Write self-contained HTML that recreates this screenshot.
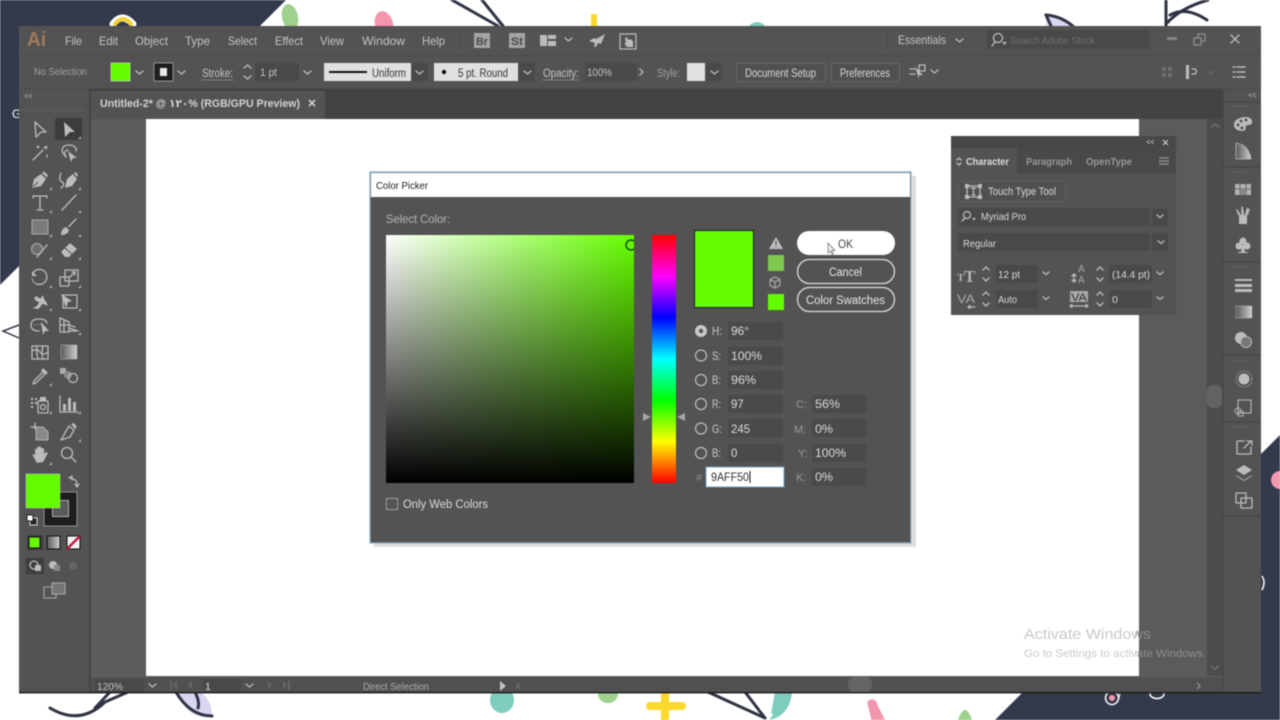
<!DOCTYPE html>
<html><head><meta charset="utf-8"><title>Illustrator Color Picker</title>
<style>
html,body{margin:0;padding:0;width:1280px;height:720px;overflow:hidden;background:#fff}
svg{display:block;position:absolute;left:0;top:0;filter:blur(.5px)}
text{font-family:"Liberation Sans","DejaVu Sans",sans-serif;font-size:11px;fill:#c4c4c4}
.i{fill:none;stroke:#bcbcbc;stroke-width:1.300;stroke-linejoin:round;stroke-linecap:round}
.f{fill:#bcbcbc;stroke:none}
.c{fill:none;stroke:#b8b8b8;stroke-width:1.400;stroke-linecap:round;stroke-linejoin:round}
.d{fill:none;stroke:#2f3343;stroke-width:3;stroke-linecap:round}
.fld{fill:#494949}
.lab{fill:#c8c8c8;font-size:12px}
.val{fill:#dcdcdc;font-size:11.500px}
</style></head><body>
<svg width="1280" height="720" viewBox="0 0 1280 720" xmlns="http://www.w3.org/2000/svg">
<defs>
<linearGradient id="sv1" x1="0" x2="1" y1="0" y2="0"><stop offset="0" stop-color="#fff"/><stop offset="1" stop-color="#66ff00"/></linearGradient>
<linearGradient id="sv2" x1="0" x2="0" y1="0" y2="1"><stop offset="0" stop-color="#000" stop-opacity="0"/><stop offset="1" stop-color="#000"/></linearGradient>
<linearGradient id="hue" x1="0" x2="0" y1="0" y2="1"><stop offset="0" stop-color="#f00"/><stop offset=".167" stop-color="#f0f"/><stop offset=".333" stop-color="#00f"/><stop offset=".5" stop-color="#0ff"/><stop offset=".667" stop-color="#0f0"/><stop offset=".833" stop-color="#ff0"/><stop offset="1" stop-color="#f00"/></linearGradient>
<linearGradient id="grad" x1="0" x2="1" y1="0" y2="0"><stop offset="0" stop-color="#5a5a5a"/><stop offset="1" stop-color="#d0d0d0"/></linearGradient>
<linearGradient id="awin" gradientUnits="userSpaceOnUse" x1="1024" x2="1210" y1="0" y2="0"><stop offset=".6" stop-color="#c9c9c9"/><stop offset=".6" stop-color="#8d8d8d"/></linearGradient>
<clipPath id="svc"><rect x="386" y="235" width="248" height="248"/></clipPath>
</defs>

<!-- background -->
<rect width="1280" height="720" fill="#fff"/>
<polygon points="0,0 286,0 0,285" fill="#343a4b"/>
<polygon points="995,720 1280,435 1280,720" fill="#343a4b"/>
<path d="M19 325L3 331L19 338" fill="none" stroke="#343a4b" stroke-width="1.500"/>
<ellipse cx="290" cy="17" rx="8" ry="13" fill="#9fd18e" transform="rotate(-12 290 17)"/>
<ellipse cx="384" cy="24" rx="9" ry="13" fill="#f396ae" transform="rotate(-15 384 24)"/>
<rect x="591" y="14" width="6" height="14" fill="#fbd92c"/>
<ellipse cx="757" cy="30" rx="9" ry="8" fill="#7fcdbd"/>
<path d="M1046 16 Q1062 16 1075 28 L1046 28Z" fill="#d8d5ef"/>
<path class="d" d="M1046 15 Q1062 16 1075 28" stroke-width="2"/>
<path class="d" d="M1046 15 L1052 28" stroke-width="2"/>
<path class="d" d="M452 0 L498 26 M482 0 L503 26"/>
<path class="d" d="M1166 0 V28 M1166 24 Q1180 8 1208 0 M1170 15 Q1186 6 1207 20" stroke-width="2"/>
<path d="M113 24 Q122 12 133 24" fill="none" stroke="#fff" stroke-width="7" stroke-linecap="round"/>
<path d="M115 24 Q123 14 131 24" fill="none" stroke="#f2cf32" stroke-width="4" stroke-linecap="round"/>
<text x="12" y="118" style="fill:#fff;font-size:12px">G</text>
<!-- bottom decorations -->
<path class="d" d="M50 708 Q80 726 105 702 L128 692 M95 708 L110 692" stroke-width="2"/>
<path d="M176 692 Q190 722 212 716 Q212 700 200 692Z" fill="#d8d5ef"/>
<path class="d" d="M176 692 Q190 716 212 716 M195 692 Q200 702 198 708" stroke-width="2"/>
<ellipse cx="502" cy="700" rx="12" ry="13" fill="#7fcdbd"/>
<ellipse cx="608" cy="694" rx="10" ry="9" fill="#9fd18e"/>
<path d="M665 692 V720 M650 706 H682" stroke="#fbd92c" stroke-width="8" stroke-linecap="round"/>
<path class="d" d="M708 692 L765 718 M745 692 L765 718"/>
<path d="M770 720 Q790 715 792 692 L775 692Z" fill="#7fcdbd"/>
<path d="M761 708 L772 716" stroke="#fff" stroke-width="4"/>
<path d="M867 702 Q875 695 878 706 L886 722 L872 722Z" fill="#f396ae"/>
<path d="M958 720 Q965 700 972 720Z" fill="#9fd18e"/>
<circle cx="1112" cy="698" r="6.500" fill="none" stroke="#fff" stroke-width="1.500"/><circle cx="1112" cy="698" r="3" fill="#f396ae"/><path d="M1116 703Q1120 698 1120 692" fill="none" stroke="#fff"/>
<ellipse cx="1157" cy="694" rx="7" ry="4.500" fill="none" stroke="#fff" stroke-width="1.500"/>
<circle cx="1280" cy="480" r="9" fill="#f396ae"/>
<path d="M1262 576 Q1266 582 1262 590" fill="none" stroke="#fff" stroke-width="1.500"/>

<!-- window -->
<rect x="19" y="26" width="1242" height="666" fill="#535353"/>
<rect x="19" y="692" width="1242" height="1.400" fill="#1a1a1a"/>
<rect x="19" y="55" width="1242" height="1" fill="#4b4b4b"/>
<rect x="19" y="88" width="1242" height="1" fill="#4a4a4a"/>
<!-- menu -->
<text x="27" y="46" textLength="19" lengthAdjust="spacingAndGlyphs" style="font-size:20px;font-weight:bold;fill:#a27a5a">Ai</text>
<text x="65" y="45" textLength="17" lengthAdjust="spacingAndGlyphs" style="font-size:12px">File</text>
<text x="99" y="45" textLength="19" lengthAdjust="spacingAndGlyphs" style="font-size:12px">Edit</text>
<text x="135" y="45" textLength="33" lengthAdjust="spacingAndGlyphs" style="font-size:12px">Object</text>
<text x="185" y="45" textLength="25" lengthAdjust="spacingAndGlyphs" style="font-size:12px">Type</text>
<text x="228" y="45" textLength="29" lengthAdjust="spacingAndGlyphs" style="font-size:12px">Select</text>
<text x="275" y="45" textLength="28" lengthAdjust="spacingAndGlyphs" style="font-size:12px">Effect</text>
<text x="320" y="45" textLength="24" lengthAdjust="spacingAndGlyphs" style="font-size:12px">View</text>
<text x="362" y="45" textLength="43" lengthAdjust="spacingAndGlyphs" style="font-size:12px">Window</text>
<text x="422" y="45" textLength="23" lengthAdjust="spacingAndGlyphs" style="font-size:12px">Help</text>
<rect x="460" y="32" width="1" height="17" fill="#4c4c4c"/>
<rect x="474" y="33" width="16" height="15" fill="#a4a4a4"/><text x="476" y="45" textLength="12" lengthAdjust="spacingAndGlyphs" style="font-size:11px;font-weight:bold;fill:#4a4a4a">Br</text>
<rect x="509" y="33" width="16" height="15" fill="#a4a4a4"/><text x="511" y="45" textLength="12" lengthAdjust="spacingAndGlyphs" style="font-size:11px;font-weight:bold;fill:#4a4a4a">St</text>
<path class="f" d="M540 35h7v11h-7zM548 35h8v4h-8zM548 41h8v5h-8z"/>
<path class="c" d="M565 38l3.500 3 3.500-3"/>
<path class="f" d="M605 34l-4 10-3-1-2 4-2-1 1-3-6-2 5-3 2 1z"/>
<rect x="620" y="34" width="16" height="15" fill="none" stroke="#b5b5b5" stroke-width="1.300"/><path class="f" d="M625 38l2-1 1 3 2-1 3 2v6h-6l-3-4 2 0z"/>
<rect x="887" y="32" width="1" height="17" fill="#4c4c4c"/>
<text x="898" y="44" textLength="48" lengthAdjust="spacingAndGlyphs" style="font-size:12px">Essentials</text>
<path class="c" d="M956 39l3.500 3 3.500-3"/>
<rect x="987" y="30" width="163" height="19" fill="#494949"/>
<circle cx="998" cy="38" r="4.500" class="i"/><path class="i" d="M995 42l-3 4"/><path class="f" d="M1002 42h5l-2.500 3z"/>
<text x="1010" y="44" textLength="85" lengthAdjust="spacingAndGlyphs" style="font-size:10.500px;fill:#6f6f6f">Search Adobe Stock</text>
<rect x="1167" y="37" width="10" height="3" fill="#858585"/>
<path class="i" style="stroke:#8f8f8f" d="M1194 38h7v7h-7zM1198 38v-4h7v7h-4"/>
<path class="c" d="M1231 35l8 8M1239 35l-8 8"/>

<!-- control bar -->
<text x="34" y="75" textLength="53" lengthAdjust="spacingAndGlyphs" style="font-size:10.500px;fill:#a0a0a0">No Selection</text>
<rect x="111" y="63" width="19" height="18" fill="#64fa00" stroke="#e8e8e8" stroke-width=".6"/>
<path class="c" d="M136 71l3.500 3 3.500-3"/>
<rect x="154" y="63" width="19" height="18" fill="#1e1e1e" stroke="#aaa" stroke-width=".8"/><rect x="160" y="68" width="7" height="8" fill="#e8e8e8"/>
<path class="c" d="M178 71l3.500 3 3.500-3"/>
<text x="202" y="77" textLength="31" lengthAdjust="spacingAndGlyphs" style="font-size:11.500px">Stroke:</text>
<path d="M202 80h31" stroke="#aaa" stroke-dasharray="1 1"/>
<path class="c" d="M244 68l3.500-3 3.500 3M244 76l3.500 3 3.500-3"/>
<rect x="255" y="63" width="44" height="18" class="fld"/>
<text x="260" y="76" textLength="17" lengthAdjust="spacingAndGlyphs" style="font-size:11px">1 pt</text>
<path class="c" d="M304 71l3.500 3 3.500-3"/>
<rect x="324" y="63" width="87" height="18" fill="#e0e0e0"/>
<rect x="329" y="71" width="38" height="2" fill="#111"/>
<text x="372" y="77" textLength="34" lengthAdjust="spacingAndGlyphs" style="font-size:11.500px;fill:#333">Uniform</text>
<rect x="412" y="63" width="16" height="18" fill="#494949"/><path class="c" d="M416 71l3.500 3 3.500-3"/>
<rect x="434" y="63" width="84" height="18" fill="#e0e0e0"/>
<circle cx="444" cy="72" r="2.200" fill="#111"/>
<text x="458" y="77" textLength="50" lengthAdjust="spacingAndGlyphs" style="font-size:11.500px;fill:#333">5 pt. Round</text>
<rect x="519" y="63" width="16" height="18" fill="#494949"/><path class="c" d="M524 71l3.500 3 3.500-3"/>
<text x="543" y="77" textLength="36" lengthAdjust="spacingAndGlyphs" style="font-size:11.500px">Opacity:</text>
<path d="M543 80h36" stroke="#aaa" stroke-dasharray="1 1"/>
<rect x="585" y="63" width="52" height="18" class="fld"/>
<text x="587" y="76" textLength="25" lengthAdjust="spacingAndGlyphs" style="font-size:11px">100%</text>
<path class="c" d="M640 69l3 3-3 3"/>
<text x="657" y="77" textLength="23" lengthAdjust="spacingAndGlyphs" style="font-size:11.500px;fill:#a0a0a0">Style:</text>
<rect x="687" y="63" width="18" height="18" fill="#e0e0e0"/>
<rect x="706" y="63" width="16" height="18" fill="#494949"/><path class="c" d="M711 71l3.500 3 3.500-3"/>
<rect x="736.500" y="63.500" width="89" height="18" fill="#505050" stroke="#666"/>
<text x="745" y="77" textLength="71" lengthAdjust="spacingAndGlyphs" style="font-size:11.500px;fill:#d8d8d8">Document Setup</text>
<rect x="831.500" y="63.500" width="68" height="18" fill="#505050" stroke="#666"/>
<text x="840" y="77" textLength="50" lengthAdjust="spacingAndGlyphs" style="font-size:11.500px;fill:#d8d8d8">Preferences</text>
<path class="i" d="M910 69h5M910 74h5M919 65h6v6h-6z"/><path class="f" d="M915 67l8 8-4 0 0 4z"/>
<path class="c" d="M931 70l3.500 3 3.500-3"/>
<path fill="#6e6e6e" d="M1162 67h4v4h-4zM1168 67h4v4h-4zM1162 73h4v4h-4zM1168 73h4v4h-4z"/>
<path class="f" d="M1186 65h3v14h-3z"/><path class="i" d="M1192 69h3q3 2 0 5h-3"/><path d="M1208 71l3 3 3-3" fill="none" stroke="#666" stroke-width="1.300"/>
<path class="c" d="M1233 67h2M1233 72h2M1233 77h2M1237 67h8M1237 72h8M1237 77h8"/>

<!-- doc tab row -->
<rect x="91" y="89" width="1132" height="30" fill="#434343"/>
<rect x="91" y="91" width="234" height="28" fill="#535353"/>
<text x="100" y="107" textLength="200" lengthAdjust="spacingAndGlyphs" style="font-family:'Liberation Sans','DejaVu Sans',sans-serif;font-size:11px;font-weight:bold;fill:#d2d2d2">Untitled-2* @ ۱۲۰% (RGB/GPU Preview)</text>
<path d="M309 100l6 6M315 100l-6 6" stroke="#ddd" stroke-width="1.500"/>
<path d="M28 94l-3 2 3 2M32 94l-3 2 3 2" fill="none" stroke="#999"/>
<path d="M1252 93l-3 2 3 2M1256 93l-3 2 3 2" fill="none" stroke="#999"/>

<!-- canvas -->
<rect x="91" y="119" width="1116" height="557" fill="#5b5b5b"/>
<rect x="146" y="119" width="993" height="557" fill="#fff"/>
<rect x="89" y="89" width="2" height="603" fill="#444"/>
<rect x="1207" y="119" width="16" height="557" fill="#4c4c4c"/>
<rect x="1207" y="385" width="15" height="23" rx="6" fill="#626262"/>
<path d="M1211 127l4-3 4 3" fill="none" stroke="#707070" stroke-width="1.500"/>
<path d="M1211 666l4 3 4-3" fill="none" stroke="#707070" stroke-width="1.500"/>
<rect x="1223" y="89" width="1" height="603" fill="#464646"/>

<!-- status bar -->
<rect x="91" y="676" width="1132" height="16" fill="#505050"/>
<rect x="91" y="676" width="1132" height="1" fill="#626262"/>
<rect x="95" y="679" width="49" height="13" class="fld"/>
<text x="97" y="690" textLength="26" lengthAdjust="spacingAndGlyphs" style="font-size:10.500px">120%</text>
<path class="c" d="M149 684l3.500 3 3.500-3"/>
<path fill="#666" d="M170 681h2v9h-2zM173 685l4-4v9zM188 685l4-4v9z"/>
<rect x="203" y="679" width="38" height="13" class="fld"/>
<text x="205" y="690" style="font-size:10.500px;fill:#ddd">1</text>
<path class="c" d="M246 684l3.500 3 3.500-3"/>
<path fill="#666" d="M268 681l4 4-4 5zM283 681l4 4-4 5zM288 681h2v9h-2z"/>
<text x="363" y="690" textLength="66" lengthAdjust="spacingAndGlyphs" style="font-size:10.500px;fill:#aeaeae">Direct Selection</text>
<path fill="#c4c4c4" d="M500 681l6 5-6 5z"/>
<path d="M520 683l-3 3 3 3" fill="none" stroke="#777" stroke-width="1.200"/>
<rect x="848" y="677" width="24" height="15" rx="7" fill="#646464"/>
<path d="M1197 683l3 3-3 3" fill="none" stroke="#999" stroke-width="1.200"/>

<!-- left toolbar -->
<rect x="23" y="110" width="62" height="1" fill="#636363"/>
<rect x="55" y="118" width="27" height="22" rx="2" fill="#3c3c3c"/>
<g transform="translate(40,129)"><path class="i" d="M-5-7L6 3H1L-4 8Z"/></g>
<g transform="translate(69,129)"><path class="f" d="M-5-7L6 3H1L-4 8Z"/></g>
<g transform="translate(40,153)"><path class="i" d="M-7 7L3-3" stroke-width="2.400"/><path class="i" d="M6-7v3M4-5.500h3M-2-7v2M-3-6h2M7 2v2"/></g>
<g transform="translate(69,153)"><path class="i" d="M-3 3C-9 0-8-8 0-8C5-8 8-5 7-2"/><path class="i" d="M-3 4C-6 2-4-3-1-3"/><path class="f" d="M-1-2L8 5H4L2 9Z"/></g>
<g transform="translate(40,180)"><path class="f" d="M-8 8L-6-1L1-6L6-1L1 6Z"/><path d="M-7 7L-2 2" stroke="#535353"/><path class="f" d="M2-7L4-8.500L8-4.500L6.500-2.500Z"/></g>
<g transform="translate(69,180)"><path class="f" d="M-4 8L-2-1L4-6L8-1L3 6Z"/><path class="f" d="M5-7L7-8L9-5L8-3Z"/><path class="i" d="M-8-7Q-11 0-7 2T-8 8"/></g>
<g transform="translate(40,203)"><path class="i" stroke-width="1.800" d="M-7-5V-7H7V-5M0-7V7M-3 7H3"/></g>
<g transform="translate(69,203)"><path class="i" d="M-7 7L7-8" stroke-width="1.500"/></g>
<g transform="translate(40,227)"><rect x="-8" y="-7" width="16" height="14" fill="#7a7a7a" stroke="#aaa"/></g>
<g transform="translate(69,227)"><path class="f" d="M-8 8Q-8 2-3 0L0 3Q-1 8-8 8Z"/><path class="i" stroke-width="2.600" d="M0-.5L7-8"/></g>
<g transform="translate(40,250)"><circle cx="-3" cy="-1" r="5.500" fill="#6e6e6e" stroke="#b0b0b0"/><path class="i" stroke-width="2.800" d="M-3 7L7-5"/></g>
<g transform="translate(69,250)"><path class="f" d="M-8 2L1-7L8-1L0 7H-4Z"/><path d="M-4-2L4 5" stroke="#535353"/></g>
<g transform="translate(40,278)"><path class="i" d="M-7-5A7.500 7.500 0 1 1-3 6" /><path class="i" stroke-dasharray="1 2" d="M-3 6Q-7 5-8 0"/><path class="f" d="M-8-7v5h5z"/></g>
<g transform="translate(69,278)"><rect x="-9" y="-1" width="9" height="9" class="i"/><rect x="-4" y="-8" width="13" height="11" class="i"/><path class="i" d="M1-1L6-6M3-6h3v3"/></g>
<g transform="translate(40,301)"><path class="f" d="M-8 7Q-2 6-1 1Q-5 0-6-3L-3-5Q-1-2 1-3L3-6L4-2Q7 2 8 5Q4 3 2 3Q0 7-2 8Z"/></g>
<g transform="translate(69,301)"><path class="i" stroke-dasharray="2 1" d="M-6-6H8V7H-6Z"/><path class="f" d="M-8-7L3 0L-1 1L-3 7Z"/></g>
<g transform="translate(40,325)"><path class="i" d="M-1 6Q-9 6-9 0T-1-6Q6-6 7-2"/><path class="f" d="M1-3L9 6H5L3 10Z"/><path class="f" d="M-6-1h1v1h-1zM-3-1h1v1h-1zM0-1h1v1h-1z"/></g>
<g transform="translate(69,325)"><path class="i" d="M-9-7L0-3V7H-9Z"/><path class="i" d="M-9 0H0M-5-5V7M0 0L6 2M0 3L9 6M0 6H9" stroke-width=".9"/></g>
<g transform="translate(40,352)"><rect x="-8" y="-6" width="16" height="13" class="i"/><path class="i" stroke-width=".9" d="M-8-1Q-3-4 0 0T8 0M-3-6Q-4 0-2 7M3-6Q1 0 3 7"/></g>
<g transform="translate(69,352)"><rect x="-8" y="-7" width="16" height="14" fill="url(#grad)" stroke="#aaa" stroke-width=".6"/></g>
<g transform="translate(40,376)"><path class="f" d="M3-8L8-3L5-1L1-5Z"/><path class="i" d="M2-3L-6 5L-7 8L-4 7L4-1"/></g>
<g transform="translate(69,376)"><rect x="-9" y="-8" width="6" height="6" fill="#aaa"/><circle cx="-1" cy="-1" r="4" fill="#888"/><circle cx="4" cy="2" r="4.500" class="i"/></g>
<g transform="translate(40,404)"><path class="f" d="M-9-6h2v2h-2zM-5-6h2v2h-2zM-9-2h2v2h-2zM-9 2h2v2h-2zM-5-2h2v2h-2z"/><rect x="-2" y="-3" width="10" height="12" rx="1" class="i"/><rect x="0" y="-7" width="6" height="4" class="f"/><circle cx="3" cy="3" r="2.500" class="i"/></g>
<g transform="translate(69,404)"><path class="i" d="M-9-8V8H9"/><path class="f" d="M-6 0h3v7h-3zM-1-6h3v13h-3zM4-2h3v9h-3z"/></g>
<g transform="translate(40,432)"><path class="i" d="M-9-5H-3M-5-9V-3"/><path d="M-4-5H3L8 0V8H-4Z" fill="#8a8a8a" stroke="#b0b0b0"/></g>
<g transform="translate(69,432)"><path class="i" d="M-8 8L0-6L5-2L1 5Z"/><path class="f" d="M2-8L5-9L8-5L6-3Z"/></g>
<g transform="translate(40,455)"><path class="f" d="M-8-1L-5 0V-6L-3-6V-8L-1-8V-9L1-8V-7L3-7L4-6V-1L6-3L8-2L3 7L-3 8Z"/></g>
<g transform="translate(69,455)"><circle cx="-2" cy="-2" r="5.500" class="i"/><path class="i" stroke-width="1.800" d="M2 2L7 7"/></g>
<path fill="#b0b0b0" d="M52 190l-3 0 3-3zM81 190l-3 0 3-3zM52 213l-3 0 3-3zM81 213l-3 0 3-3zM52 237l-3 0 3-3zM81 237l-3 0 3-3zM52 260l-3 0 3-3zM81 260l-3 0 3-3zM52 288l-3 0 3-3zM81 288l-3 0 3-3zM52 311l-3 0 3-3zM81 311l-3 0 3-3zM81 335l-3 0 3-3zM52 386l-3 0 3-3zM52 414l-3 0 3-3zM81 414l-3 0 3-3zM81 442l-3 0 3-3zM52 465l-3 0 3-3zM81 139l-3 0 3-3z"/>

<!-- colour swatches in toolbar -->
<rect x="44" y="492" width="33" height="34" fill="#1e1e1e" stroke="#aaa" stroke-width=".8"/>
<rect x="52.500" y="500.500" width="16" height="16" fill="#5a5a5a" stroke="#b0b0b0"/>
<rect x="26" y="474" width="34" height="34" fill="#64fa00" stroke="#ccc" stroke-width=".5"/>
<path class="i" d="M70 478l3 1q4 1 4 5v1M75 484l2 3 2-3M69 478l3-2v4" stroke-width="1.200"/>
<rect x="30" y="518" width="7" height="7" fill="#222" stroke="#ddd"/><rect x="27" y="515" width="6" height="6" fill="#fff" stroke="#222"/>
<rect x="27" y="535" width="16" height="15" fill="#3c3c3c"/>
<rect x="29" y="537" width="11" height="11" fill="#64fa00" stroke="#111"/>
<rect x="47" y="536" width="13" height="13" fill="url(#grad)" stroke="#111"/>
<rect x="67" y="536" width="13" height="13" fill="#f2f2f2" stroke="#111"/><path d="M67 549L80 536" stroke="#c0143c" stroke-width="2.400"/>
<rect x="26" y="558" width="18" height="16" rx="1" fill="#3e3e3e"/>
<circle cx="34" cy="565" r="4" class="i"/><rect x="35" y="565" width="6" height="6" class="f"/>
<circle cx="53" cy="565" r="4" class="f"/><rect x="54" y="565" width="6" height="6" fill="#888"/>
<circle cx="73" cy="566" r="4" fill="#666"/>
<rect x="44" y="587" width="12" height="11" fill="none" stroke="#a0a0a0" stroke-width="1.200"/>
<rect x="52" y="583" width="13" height="11" fill="#757575" stroke="#a0a0a0" stroke-width="1.200"/>

<!-- right dock -->
<path stroke="#454545" d="M1224 102h37M1224 167h37M1224 262h37M1224 355h37M1224 422h37M1224 516h37"/>
<path stroke="#737373" stroke-dasharray="1 1" d="M1233 106h14M1233 172h14M1233 267h14M1233 361h14M1233 427h14"/>
<g transform="translate(1243,124)"><path class="f" d="M-9 1C-9-5-2-7 3-7C8-7 10-3 9-1C8 2 4 0 3 2C2 5 4 6 0 7C-5 7-9 5-9 1Z"/><g fill="#535353"><circle cx="-5" cy="1" r="1.500"/><circle cx="-2" cy="-3" r="1.500"/><circle cx="3" cy="-4" r="1.500"/><circle cx="-1" cy="4" r="1.500"/></g></g>
<g transform="translate(1243,151)"><path d="M-7 8V-8Q6-6 8 8Z" fill="url(#grad)" stroke="#bbb" stroke-width=".8"/></g>
<g transform="translate(1243,190)"><rect x="-8" y="-6" width="16" height="11" fill="#b4b4b4"/><path d="M-3-6V5M3-6V5M-8-1H8" stroke="#666"/><rect x="-3" y="-1" width="6" height="6" fill="#888"/></g>
<g transform="translate(1243,215)"><path class="f" d="M-4 0H4V9H-4Z"/><path class="f" d="M-7-6L-3 0H-5ZM0-9L1 0H-1ZM7-6L3 0H5ZM-2-2L-6-1ZM4-8L6-4L2 0Z"/><path class="i" d="M-1-8V0M-6-5L-3 0M6-6L3 0" stroke-width="1.600"/></g>
<g transform="translate(1243,245)"><circle cx="0" cy="-4" r="3.500" class="f"/><circle cx="-4" cy="1" r="3.500" class="f"/><circle cx="4" cy="1" r="3.500" class="f"/><path class="f" d="M-1 0H1L2 7H5V8H-5V7H-2Z"/></g>
<path class="f" d="M1235 279h17v2h-17zM1235 284h17v3h-17zM1235 289h17v3h-17z"/>
<rect x="1236" y="306" width="16" height="12" fill="url(#grad)" stroke="#aaa" stroke-width=".6"/>
<circle cx="1241" cy="338" r="6" class="f"/><circle cx="1246" cy="342" r="5.500" fill="#777" stroke="#bbb"/>
<circle cx="1244" cy="379" r="5.500" class="f"/><circle cx="1244" cy="379" r="8" fill="none" stroke="#b0b0b0" stroke-dasharray="1.500 1.500"/>
<rect x="1238" y="400" width="13" height="13" fill="none" stroke="#b0b0b0" stroke-width="1.200"/><circle cx="1238" cy="411" r="3" fill="none" stroke="#b0b0b0"/><rect x="1238" y="411" width="5" height="5" fill="none" stroke="#b0b0b0"/>
<path class="i" stroke-width="1.600" d="M1244 441h-7v13h14v-7M1244 448l7-7M1247 441h5v4"/>
<path class="f" d="M1244 465l8 5-8 5-8-5zM1236 475l8 5 8-5v1l-8 5-8-5z"/>
<path class="i" stroke-width="1.200" d="M1236 493h10v10h-10zM1241 498h11v10h-11z"/>

<!-- character panel -->
<rect x="951" y="136" width="225" height="179" fill="#535353"/>
<rect x="951" y="136" width="225" height="12" fill="#474747"/>
<rect x="1017" y="148" width="159" height="26" fill="#494949"/>
<path d="M1150 140l-3 2 3 2M1154 140l-3 2 3 2" fill="none" stroke="#aaa"/>
<path d="M1163 140l5 5M1168 140l-5 5" stroke="#ccc" stroke-width="1.200"/>
<path class="c" d="M957 160l2-2 2 2M957 163l2 2 2-2" stroke-width="1"/>
<text x="966" y="165" textLength="43" lengthAdjust="spacingAndGlyphs" style="font-size:10.500px;font-weight:bold;fill:#dcdcdc">Character</text>
<text x="1026" y="165" textLength="46" lengthAdjust="spacingAndGlyphs" style="font-size:10.500px;font-weight:bold;fill:#989898">Paragraph</text>
<text x="1086" y="165" textLength="46" lengthAdjust="spacingAndGlyphs" style="font-size:10.500px;font-weight:bold;fill:#989898">OpenType</text>
<path stroke="#999" stroke-width="1.300" d="M1159 158h10M1159 161h10M1159 164h10"/>
<rect x="958.500" y="181.500" width="107" height="20" rx="2" fill="#505050" stroke="#626262"/>
<path class="i" d="M967 186h13v11h-13z" stroke-width="1"/><path class="f" d="M965 184h4v4h-4zM978 184h4v4h-4zM965 195h4v4h-4zM978 195h4v4h-4z"/>
<path class="i" d="M971 188h5M973.500 188v7M972 195h3" stroke-width="1.100"/>
<text x="988" y="195" textLength="68" lengthAdjust="spacingAndGlyphs" style="font-size:11px;fill:#d8d8d8">Touch Type Tool</text>
<rect x="958" y="208" width="192" height="18" class="fld"/>
<circle cx="967" cy="215" r="3.500" class="i" stroke-width="1"/><path class="i" d="M965 218l-3 3" stroke-width="1"/><path class="f" d="M972 218h4l-2 2.500z"/>
<text x="981" y="220" textLength="45" lengthAdjust="spacingAndGlyphs" style="font-size:10.500px;fill:#d8d8d8">Myriad Pro</text>
<rect x="1152" y="208" width="16" height="18" class="fld"/><path class="c" d="M1157 215l3 2.500 3-2.500" stroke-width="1.300"/>
<rect x="958" y="233" width="192" height="18" class="fld"/>
<text x="963" y="247" textLength="33" lengthAdjust="spacingAndGlyphs" style="font-size:10.500px;fill:#d8d8d8">Regular</text>
<rect x="1152" y="233" width="16" height="18" class="fld"/><path class="c" d="M1158 241l3 2.500 3-2.500" stroke-width="1.300"/>
<text x="957" y="281" style="font-size:11px;font-family:'Liberation Serif',serif;fill:#b5b5b5;font-weight:bold">T</text>
<text x="964" y="282" style="font-size:17px;font-family:'Liberation Serif',serif;fill:#b5b5b5;font-weight:bold">T</text>
<path class="c" d="M983 270l3-3 3 3M983 278l3 3 3-3" stroke-width="1.300"/>
<rect x="996" y="265" width="42" height="18" class="fld"/>
<text x="998" y="278" textLength="22" lengthAdjust="spacingAndGlyphs" style="font-size:10.500px;fill:#d8d8d8">12 pt</text>
<path class="c" d="M1043 272l3 2.500 3-2.500" stroke-width="1.300"/>
<text x="1078" y="272" style="font-size:10px;fill:#a8a8a8">A</text><text x="1078" y="283" style="font-size:10px;fill:#a8a8a8">A</text>
<path class="i" stroke-width="1" d="M1074 274v8M1072 276l2-2 2 2M1072 280l2 2 2-2"/>
<path class="c" d="M1097 270l3-3 3 3M1097 278l3 3 3-3" stroke-width="1.300"/>
<rect x="1109" y="265" width="43" height="18" class="fld"/>
<text x="1112" y="278" textLength="38" lengthAdjust="spacingAndGlyphs" style="font-size:10.500px;fill:#d8d8d8">(14.4 pt)</text>
<path class="c" d="M1157 272l3 2.500 3-2.500" stroke-width="1.300"/>
<text x="957" y="303" textLength="18" lengthAdjust="spacingAndGlyphs" style="font-size:12px;fill:#a8a8a8">VA</text>
<path class="i" stroke-width="1" d="M968 307h7M968 307l2-1.500M968 307l2 1.500"/>
<path class="c" d="M983 295l3-3 3 3M983 303l3 3 3-3" stroke-width="1.300"/>
<rect x="996" y="290" width="42" height="18" class="fld"/>
<text x="998" y="303" textLength="19" lengthAdjust="spacingAndGlyphs" style="font-size:10.500px;fill:#d8d8d8">Auto</text>
<path class="c" d="M1043 297l3 2.500 3-2.500" stroke-width="1.300"/>
<rect x="1070" y="291" width="18" height="11" fill="#a8a8a8"/>
<text x="1071" y="301" textLength="16" lengthAdjust="spacingAndGlyphs" style="font-size:11px;fill:#333">VA</text>
<path class="i" stroke-width="1" d="M1070 306h18M1070 306l2-1.500M1070 306l2 1.500M1088 306l-2-1.500M1088 306l-2 1.500"/>
<path class="c" d="M1097 295l3-3 3 3M1097 303l3 3 3-3" stroke-width="1.300"/>
<rect x="1109" y="290" width="43" height="18" class="fld"/>
<text x="1112" y="303" style="font-size:10.500px;fill:#d8d8d8">0</text>
<path class="c" d="M1157 297l3 2.500 3-2.500" stroke-width="1.300"/>

<!-- dialog -->
<rect x="912" y="176" width="4" height="371" fill="#dedede"/>
<rect x="374" y="543" width="542" height="4" fill="#dedede"/>
<rect x="370" y="172" width="541" height="371" fill="#535353" stroke="#8fb0c8" stroke-width="1.300"/>
<rect x="371" y="173" width="539" height="24" fill="#fff"/>
<text x="376" y="189" textLength="52" lengthAdjust="spacingAndGlyphs" style="font-size:10.500px;fill:#222">Color Picker</text>
<text x="386" y="223" textLength="64" lengthAdjust="spacingAndGlyphs" style="font-size:12px;fill:#b5b5b5">Select Color:</text>
<rect x="386" y="235" width="248" height="248" fill="url(#sv1)"/>
<rect x="386" y="235" width="248" height="248" fill="url(#sv2)"/>
<circle cx="631" cy="245" r="5" fill="none" stroke="#0d4a00" stroke-width="1.400" clip-path="url(#svc)"/>
<rect x="652" y="235" width="24" height="248" fill="url(#hue)"/>
<path fill="#a5a5a5" d="M643 413l8 4-8 4zM685 413l-8 4 8 4z"/>
<rect x="694.500" y="230.500" width="59" height="77" fill="#64fa00" stroke="#1c1c1c"/>
<path fill="#bdbdbd" d="M776 237l7 12h-14z"/><path d="M776 241v4M776 246.500v1" stroke="#535353" stroke-width="1.300"/>
<rect x="768" y="255" width="16" height="16" fill="#7fc84f"/>
<path class="i" style="stroke:#a0a0a0" stroke-width="1" d="M775 277l5 2.500v6l-5 2.500-5-2.500v-6zM770 279.500l5 2.500 5-2.500M775 282v6"/>
<rect x="768" y="294" width="16" height="16" fill="#64fa00"/>
<rect x="797" y="231" width="98" height="24" rx="12" fill="#fff"/>
<text x="838" y="248" textLength="15" lengthAdjust="spacingAndGlyphs" style="font-size:11.500px;fill:#444">OK</text>
<rect x="797.500" y="259.500" width="97" height="24" rx="12" fill="none" stroke="#dcdcdc" stroke-width="1.300"/>
<text x="829" y="276" textLength="33" lengthAdjust="spacingAndGlyphs" style="font-size:11.500px;fill:#e8e8e8">Cancel</text>
<rect x="797.500" y="287.500" width="97" height="24" rx="12" fill="none" stroke="#dcdcdc" stroke-width="1.300"/>
<text x="806" y="304" textLength="79" lengthAdjust="spacingAndGlyphs" style="font-size:11.500px;fill:#e8e8e8">Color Swatches</text>
<path d="M828 243l0 10 2.500-2 1.500 3.500 1.500-.7-1.500-3.300 3 0Z" fill="#eee" stroke="#777" stroke-width=".8"/>

<g fill="none" stroke="#bdbdbd" stroke-width="1.200"><circle cx="701" cy="355.500" r="5.500"/><circle cx="701" cy="380" r="5.500"/><circle cx="701" cy="404" r="5.500"/><circle cx="701" cy="428.500" r="5.500"/><circle cx="701" cy="453" r="5.500"/></g>
<circle cx="701" cy="331" r="6" fill="#c8c8c8"/><circle cx="701" cy="331" r="2.200" fill="#555"/>
<g>
<rect x="728" y="322" width="55" height="18" fill="#4a4a4a"/><rect x="728" y="347" width="55" height="18" fill="#4a4a4a"/><rect x="728" y="371" width="55" height="18" fill="#4a4a4a"/><rect x="728" y="395" width="55" height="18" fill="#4a4a4a"/><rect x="728" y="419" width="55" height="18" fill="#4a4a4a"/><rect x="728" y="444" width="55" height="18" fill="#4a4a4a"/>
<rect x="812" y="395" width="54" height="18" fill="#4a4a4a"/><rect x="812" y="419" width="54" height="18" fill="#4a4a4a"/><rect x="812" y="444" width="54" height="18" fill="#4a4a4a"/><rect x="812" y="468" width="54" height="18" fill="#4a4a4a"/>
</g>
<text x="712" y="335" class="lab" textLength="10" lengthAdjust="spacingAndGlyphs">H:</text>
<text x="712" y="360" class="lab" textLength="9" lengthAdjust="spacingAndGlyphs">S:</text>
<text x="712" y="384" class="lab" textLength="9" lengthAdjust="spacingAndGlyphs">B:</text>
<text x="712" y="408" class="lab" textLength="9" lengthAdjust="spacingAndGlyphs">R:</text>
<text x="712" y="433" class="lab" textLength="10" lengthAdjust="spacingAndGlyphs">G:</text>
<text x="712" y="457" class="lab" textLength="9" lengthAdjust="spacingAndGlyphs">B:</text>
<text x="731" y="335" class="val" textLength="18" lengthAdjust="spacingAndGlyphs">96°</text>
<text x="731" y="360" class="val" textLength="31" lengthAdjust="spacingAndGlyphs">100%</text>
<text x="731" y="384" class="val" textLength="25" lengthAdjust="spacingAndGlyphs">96%</text>
<text x="731" y="408" class="val">97</text>
<text x="731" y="433" class="val">245</text>
<text x="731" y="457" class="val">0</text>
<text x="696" y="481" style="font-size:11px;fill:#8a8a8a">#</text>
<rect x="706" y="467" width="78" height="20" fill="#fff" stroke="#6f9fc4"/>
<text x="711" y="481" textLength="38" lengthAdjust="spacingAndGlyphs" style="font-size:11.500px;fill:#333">9AFF50</text>
<path d="M750 471v12" stroke="#111"/>
<text x="796" y="408" style="font-size:11px;fill:#9a9a9a">C:</text>
<text x="794" y="433" style="font-size:11px;fill:#9a9a9a">M:</text>
<text x="798" y="457" style="font-size:11px;fill:#9a9a9a">Y:</text>
<text x="796" y="481" style="font-size:11px;fill:#9a9a9a">K:</text>
<text x="815" y="408" class="val" textLength="25" lengthAdjust="spacingAndGlyphs">56%</text>
<text x="815" y="433" class="val" textLength="18" lengthAdjust="spacingAndGlyphs">0%</text>
<text x="815" y="457" class="val" textLength="31" lengthAdjust="spacingAndGlyphs">100%</text>
<text x="815" y="481" class="val" textLength="18" lengthAdjust="spacingAndGlyphs">0%</text>
<rect x="386.500" y="498.500" width="11" height="11" fill="none" stroke="#a0a0a0"/>
<text x="403" y="508" textLength="85" lengthAdjust="spacingAndGlyphs" style="font-size:11.500px;fill:#dcdcdc">Only Web Colors</text>

<!-- watermark -->
<text x="1024" y="639" textLength="127" lengthAdjust="spacingAndGlyphs" style="font-size:14.500px;fill:url(#awin)">Activate Windows</text>
<text x="1024" y="657" textLength="182" lengthAdjust="spacingAndGlyphs" style="font-size:11px;fill:url(#awin)">Go to Settings to activate Windows.</text>
</svg>
</body></html>
